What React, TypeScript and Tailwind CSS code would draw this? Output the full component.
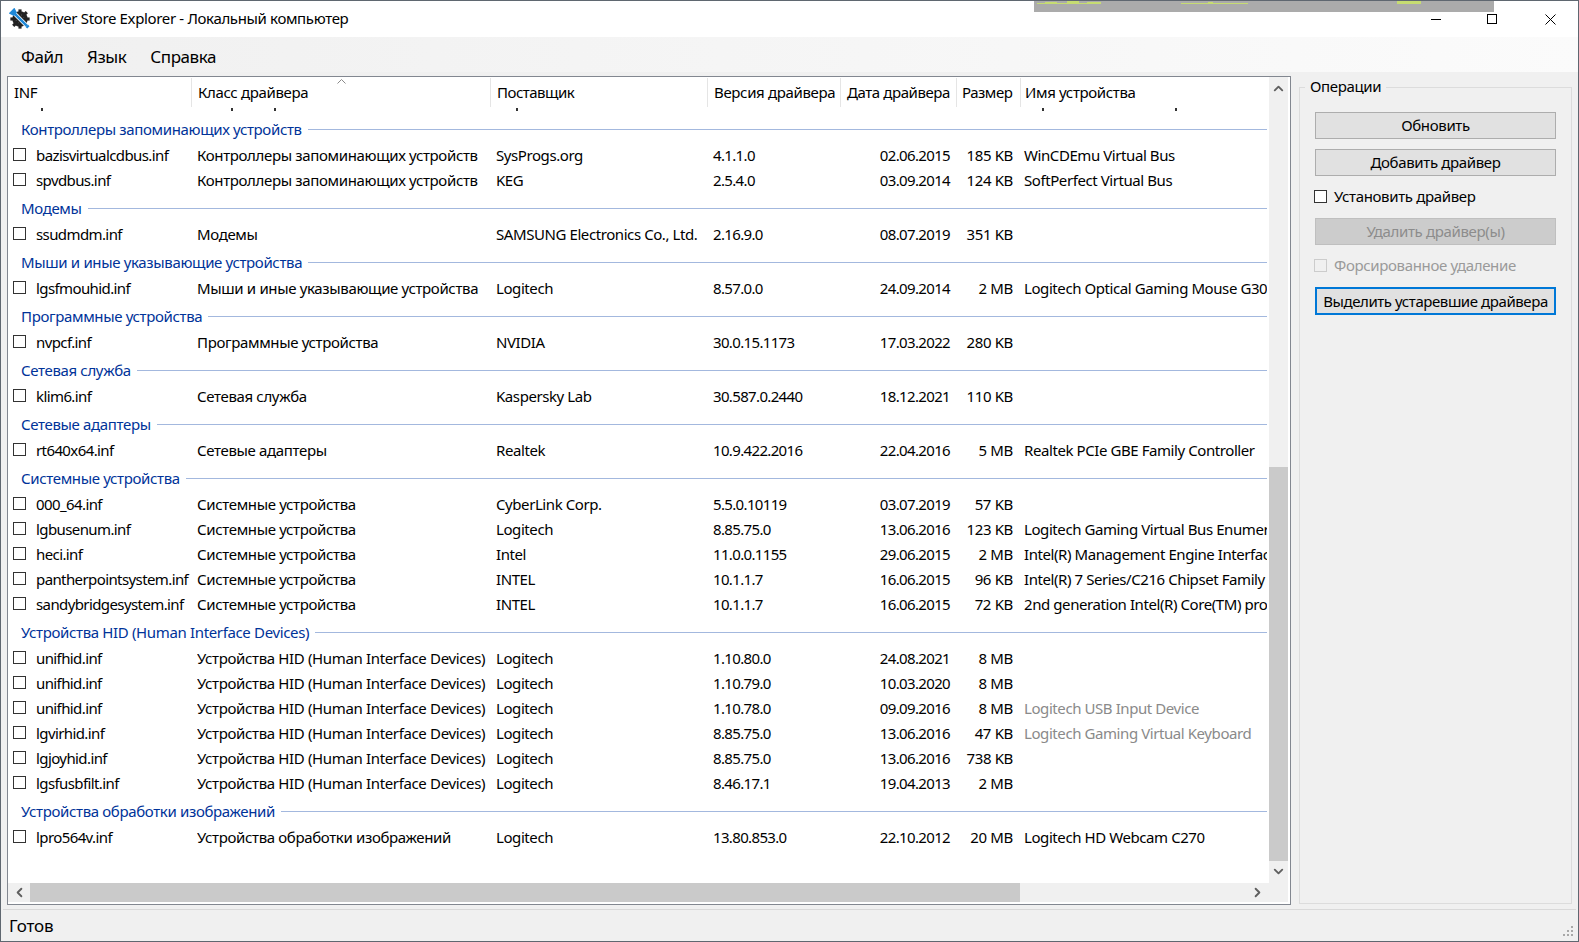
import { ChevronDown, ChevronLeft, ChevronRight, ChevronUp } from "lucide-react";

type Row = {
  inf: string;
  cls: string;
  vendor: string;
  version: string;
  date: string;
  size: string;
  device?: string;
  muted?: boolean;
};

const HID = "Устройства HID (Human Interface Devices)";
const SYS = "Системные устройства";

const GROUPS: { title: string; rows: Row[] }[] = [
  {
    title: "Контроллеры запоминающих устройств",
    rows: [
      { inf: "bazisvirtualcdbus.inf", cls: "Контроллеры запоминающих устройств", vendor: "SysProgs.org", version: "4.1.1.0", date: "02.06.2015", size: "185 KB", device: "WinCDEmu Virtual Bus" },
      { inf: "spvdbus.inf", cls: "Контроллеры запоминающих устройств", vendor: "KEG", version: "2.5.4.0", date: "03.09.2014", size: "124 KB", device: "SoftPerfect Virtual Bus" },
    ],
  },
  {
    title: "Модемы",
    rows: [{ inf: "ssudmdm.inf", cls: "Модемы", vendor: "SAMSUNG Electronics Co., Ltd.", version: "2.16.9.0", date: "08.07.2019", size: "351 KB" }],
  },
  {
    title: "Мыши и иные указывающие устройства",
    rows: [{ inf: "lgsfmouhid.inf", cls: "Мыши и иные указывающие устройства", vendor: "Logitech", version: "8.57.0.0", date: "24.09.2014", size: "2 MB", device: "Logitech Optical Gaming Mouse G300" }],
  },
  {
    title: "Программные устройства",
    rows: [{ inf: "nvpcf.inf", cls: "Программные устройства", vendor: "NVIDIA", version: "30.0.15.1173", date: "17.03.2022", size: "280 KB" }],
  },
  {
    title: "Сетевая служба",
    rows: [{ inf: "klim6.inf", cls: "Сетевая служба", vendor: "Kaspersky Lab", version: "30.587.0.2440", date: "18.12.2021", size: "110 KB" }],
  },
  {
    title: "Сетевые адаптеры",
    rows: [{ inf: "rt640x64.inf", cls: "Сетевые адаптеры", vendor: "Realtek", version: "10.9.422.2016", date: "22.04.2016", size: "5 MB", device: "Realtek PCIe GBE Family Controller" }],
  },
  {
    title: SYS,
    rows: [
      { inf: "000_64.inf", cls: SYS, vendor: "CyberLink Corp.", version: "5.5.0.10119", date: "03.07.2019", size: "57 KB" },
      { inf: "lgbusenum.inf", cls: SYS, vendor: "Logitech", version: "8.85.75.0", date: "13.06.2016", size: "123 KB", device: "Logitech Gaming Virtual Bus Enumerator" },
      { inf: "heci.inf", cls: SYS, vendor: "Intel", version: "11.0.0.1155", date: "29.06.2015", size: "2 MB", device: "Intel(R) Management Engine Interface" },
      { inf: "pantherpointsystem.inf", cls: SYS, vendor: "INTEL", version: "10.1.1.7", date: "16.06.2015", size: "96 KB", device: "Intel(R) 7 Series/C216 Chipset Family" },
      { inf: "sandybridgesystem.inf", cls: SYS, vendor: "INTEL", version: "10.1.1.7", date: "16.06.2015", size: "72 KB", device: "2nd generation Intel(R) Core(TM) processor" },
    ],
  },
  {
    title: HID,
    rows: [
      { inf: "unifhid.inf", cls: HID, vendor: "Logitech", version: "1.10.80.0", date: "24.08.2021", size: "8 MB" },
      { inf: "unifhid.inf", cls: HID, vendor: "Logitech", version: "1.10.79.0", date: "10.03.2020", size: "8 MB" },
      { inf: "unifhid.inf", cls: HID, vendor: "Logitech", version: "1.10.78.0", date: "09.09.2016", size: "8 MB", device: "Logitech USB Input Device", muted: true },
      { inf: "lgvirhid.inf", cls: HID, vendor: "Logitech", version: "8.85.75.0", date: "13.06.2016", size: "47 KB", device: "Logitech Gaming Virtual Keyboard", muted: true },
      { inf: "lgjoyhid.inf", cls: HID, vendor: "Logitech", version: "8.85.75.0", date: "13.06.2016", size: "738 KB" },
      { inf: "lgsfusbfilt.inf", cls: HID, vendor: "Logitech", version: "8.46.17.1", date: "19.04.2013", size: "2 MB" },
    ],
  },
  {
    title: "Устройства обработки изображений",
    rows: [{ inf: "lpro564v.inf", cls: "Устройства обработки изображений", vendor: "Logitech", version: "13.80.853.0", date: "22.10.2012", size: "20 MB", device: "Logitech HD Webcam C270" }],
  },
];

const COLUMNS = [
  { label: "INF", w: "w-[184px] pl-[6px]" },
  { label: "Класс драйвера", w: "w-[299px] pl-[6px]" },
  { label: "Поставщик", w: "w-[217px] pl-[6px] tracking-[-0.5px]" },
  { label: "Версия драйвера", w: "w-[133px] pl-[6px]" },
  { label: "Дата драйвера", w: "w-[116px] pl-[6px] tracking-[-0.42px]" },
  { label: "Размер", w: "w-[64px] pl-[5px] tracking-[-0.5px]" },
];

// descenders of the row scrolled away under the header
const CLIPPED = [41, 231, 274, 516, 1042, 1175];

function AppIcon() {
  return (
    <svg width="22" height="22" viewBox="0 0 24 24" className="ml-[8px] shrink-0">
      <g stroke="#222" strokeWidth="3.4">
        <line x1="12" y1="1.5" x2="12" y2="22.5" />
        <line x1="1.5" y1="12" x2="22.5" y2="12" />
        <line x1="4.6" y1="4.6" x2="19.4" y2="19.4" />
        <line x1="19.4" y1="4.6" x2="4.6" y2="19.4" />
      </g>
      <circle cx="12" cy="12" r="6.6" fill="none" stroke="#222" strokeWidth="3.6" />
      <path d="M6 6 L20 20" stroke="#ffffff" strokeWidth="4.4" />
      <path d="M2 5.5 L5.5 2 L7 5 L5 7 Z M5 5 L19.5 19.5" stroke="#1e88d8" strokeWidth="2.8" fill="#1e88d8" />
      <path d="M19 21.5 L21.5 19" stroke="#1e88d8" strokeWidth="2.5" />
    </svg>
  );
}

function Checkbox({ disabled }: { disabled?: boolean }) {
  return (
    <span
      className={
        disabled
          ? "block h-[13px] w-[13px] shrink-0 border border-[#cccccc] bg-[#f0f0f0]"
          : "block h-[13px] w-[13px] shrink-0 border border-[#333333] bg-white"
      }
    />
  );
}

function DriverRow({ row }: { row: Row }) {
  return (
    <div className="grid h-[25px] grid-cols-[189px_299px_217px_127px_110px_63px_1fr] items-center pb-[2px] pr-[2px] whitespace-nowrap">
      <div className="flex items-center overflow-hidden pl-[5px] tracking-[-0.6px]">
        <span className="mt-[-3px]">
          <Checkbox />
        </span>
        <span className="ml-[10px]">{row.inf}</span>
      </div>
      <div className="overflow-hidden">{row.cls}</div>
      <div className="overflow-hidden tracking-[-0.42px]">{row.vendor}</div>
      <div className="tracking-[-0.65px]">{row.version}</div>
      <div className="text-right tracking-[-0.65px]">{row.date}</div>
      <div className="text-right">{row.size}</div>
      <div className={row.muted ? "overflow-hidden pl-[11px] tracking-[-0.42px] text-[#8a8a8a]" : "overflow-hidden pl-[11px] tracking-[-0.42px]"}>{row.device}</div>
    </div>
  );
}

function GroupHeader({ title }: { title: string }) {
  return (
    <div className="flex h-[29px] items-center pb-[1px] pl-[13px] pr-[2px] whitespace-nowrap text-[#003399]">
      <span>{title}</span>
      <span className="ml-[6px] h-px flex-1 bg-[#a3b8de]" />
    </div>
  );
}

function DriverList() {
  return (
    <div className="flex h-[806px] w-[1261px] flex-col overflow-hidden">
      <div className="relative flex h-[31px] shrink-0 whitespace-nowrap">
        {COLUMNS.map((c) => (
          <div key={c.label} className={`${c.w} my-[1px] flex items-center border-r border-[#e5e5e5] pb-[1px]`}>
            {c.label}
          </div>
        ))}
        <div className="my-[1px] flex flex-1 items-center pb-[1px] pl-[4px]">Имя устройства</div>
        <svg width="9" height="5" viewBox="0 0 9 5" className="absolute left-[329px] top-[2px]">
          <path d="M0.5 4.5 L4.5 0.5 L8.5 4.5" fill="none" stroke="#8a8a8a" />
        </svg>
      </div>
      <div className="relative h-[7px] shrink-0">
        {CLIPPED.map((x) => (
          <span key={x} className="absolute top-0 h-[3px] w-[2px] bg-[#333333]" style={{ left: x - 8 }} />
        ))}
      </div>
      {GROUPS.map((g) => (
        <div key={g.title}>
          <GroupHeader title={g.title} />
          {g.rows.map((r) => (
            <DriverRow key={r.inf + r.version} row={r} />
          ))}
        </div>
      ))}
    </div>
  );
}

function VerticalScrollbar() {
  return (
    <div className="flex h-[806px] w-[19px] flex-col bg-[#f0f0f0] text-[#606060]">
      <div className="flex h-[22px] items-center justify-center">
        <ChevronUp size={15} strokeWidth={3} />
      </div>
      <div className="h-[368px]" />
      <div className="h-[394px] bg-[#cacaca]" />
      <div className="flex h-[22px] items-center justify-center pb-[2px]">
        <ChevronDown size={15} strokeWidth={3} />
      </div>
    </div>
  );
}

function HorizontalScrollbar() {
  return (
    <div className="flex h-[19px] w-[1280px] bg-[#f0f0f0] text-[#606060]">
      <div className="flex w-[22px] items-center justify-center">
        <ChevronLeft size={15} strokeWidth={3} />
      </div>
      <div className="w-[990px] bg-[#cacaca]" />
      <div className="w-[227px]" />
      <div className="flex w-[21px] items-center justify-center">
        <ChevronRight size={15} strokeWidth={3} />
      </div>
    </div>
  );
}

function ActionButton({ label, disabled, focused }: { label: string; disabled?: boolean; focused?: boolean }) {
  let cls = "h-[27px] border border-[#adadad] bg-[#e1e1e1] text-black";
  if (disabled) cls = "h-[27px] border border-[#bfbfbf] bg-[#cccccc] text-[#8c8c8c]";
  if (focused) cls = "h-[28px] border-2 border-[#0078d7] bg-[#e1e1e1] text-black tracking-[-0.42px]";
  return <div className={`flex w-[241px] items-center justify-center ${cls}`}>{label}</div>;
}

function CheckRow({ label, disabled }: { label: string; disabled?: boolean }) {
  return (
    <div className="mt-[10px] -ml-px flex h-[20px] items-center">
      <Checkbox disabled={disabled} />
      <span className={disabled ? "ml-[7px] text-[#9a9a9a]" : "ml-[7px]"}>{label}</span>
    </div>
  );
}

export default function App() {
  return (
    <div className="relative flex h-[942px] w-[1579px] flex-col overflow-hidden border border-[#5f6770] bg-[#f0f0f0] font-['Noto_Sans',sans-serif] text-[15px] tracking-[-0.35px] text-black">
      {/* strip of another window left over in the capture */}
      <svg width="460" height="12" className="absolute left-[1033px] top-[-1px]">
        <rect width="460" height="12" fill="#ababab" />
        <rect width="460" height="1" fill="#6e6e6e" />
        <path d="M3 3 h8 v-1 h12 v1 h10 v-2 h12 v2 h8 v-1 h14 v2 h-64 z" fill="#c6dc72" />
        <rect x="147" y="3" width="67" height="1" fill="#c6dc72" />
        <rect x="174" y="2" width="5" height="1" fill="#c6dc72" />
        <rect x="363" y="1" width="24" height="3" fill="#c6dc72" />
      </svg>

      <div className="flex h-[36px] shrink-0 items-center bg-white">
        <AppIcon />
        <span className="mb-[2px] ml-[5px]">Driver Store Explorer - Локальный компьютер</span>
        <div className="ml-auto flex h-full items-center">
          <div className="flex w-[56px] justify-center">
            <span className="h-px w-[10px] bg-black" />
          </div>
          <div className="flex w-[56px] justify-center">
            <span className="h-[10px] w-[10px] border border-black" />
          </div>
          <div className="flex w-[58px] justify-center pl-[2px]">
            <svg width="11" height="11" viewBox="0 0 11 11">
              <path d="M0.5 0.5 L10.5 10.5 M10.5 0.5 L0.5 10.5" stroke="black" fill="none" />
            </svg>
          </div>
        </div>
      </div>

      <div className="flex h-[35px] shrink-0 items-center gap-[24px] bg-linear-to-r from-[#f0f0f0] to-[#fbfbfb] pl-[20px] pt-[4px] text-[17px] tracking-[-0.45px]">
        <span>Файл</span>
        <span>Язык</span>
        <span>Справка</span>
      </div>

      <div className="mt-[4px] flex shrink-0 items-start pl-[6px]">
        <div className="h-[829px] w-[1284px] border border-[#828790] bg-white">
          <div className="flex">
            <DriverList />
            <VerticalScrollbar />
          </div>
          <HorizontalScrollbar />
        </div>

        <fieldset className="ml-[8px] mt-px h-[827px] w-[273px] border border-[#dcdcdc] px-[15px]">
          <legend className="-ml-[10px] h-[20px] px-[5px] leading-[18px]">Операции</legend>
          <div className="mt-[15px]">
            <ActionButton label="Обновить" />
          </div>
          <div className="mt-[10px]">
            <ActionButton label="Добавить драйвер" />
          </div>
          <CheckRow label="Установить драйвер" />
          <div className="mt-[12px]">
            <ActionButton label="Удалить драйвер(ы)" disabled />
          </div>
          <CheckRow label="Форсированное удаление" disabled />
          <div className="mt-[12px]">
            <ActionButton label="Выделить устаревшие драйвера" focused />
          </div>
        </fieldset>
      </div>

      <div className="mx-[2px] mt-[4px] h-px shrink-0 bg-[#d9d9d9]" />
      <div className="flex flex-1 items-center justify-between pl-[8px] pr-[5px] text-[17px] tracking-[-0.2px]">
        <span>Готов</span>
        <div className="mt-auto mb-[5px] grid grid-cols-3 gap-[2px]">
          {[0, 0, 1, 0, 1, 1, 1, 1, 1].map((on, i) => (
            <span key={i} className={on ? "h-[2px] w-[2px] bg-[#a8a8a8]" : "h-[2px] w-[2px]"} />
          ))}
        </div>
      </div>
    </div>
  );
}
